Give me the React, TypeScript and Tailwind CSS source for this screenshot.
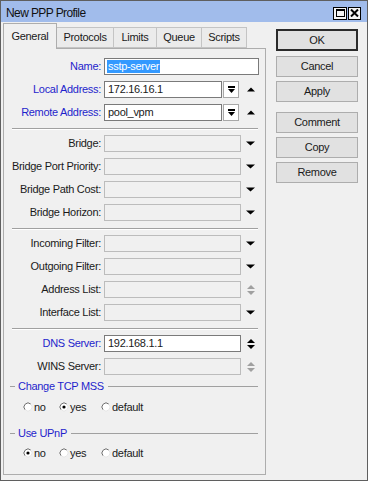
import React from "react";

const BLUE = "text-[#1f1fcc]";

function Up({ color = "#000" }: { color?: string }) {
  return (
    <svg width="8" height="5" viewBox="0 0 8 5">
      <polygon points="0,4.5 8,4.5 4,0.5" fill={color} />
    </svg>
  );
}
function Down({ color = "#000" }: { color?: string }) {
  return (
    <svg width="9" height="5" viewBox="0 0 9 5">
      <polygon points="0,0.5 9,0.5 4.5,4.5" fill={color} />
    </svg>
  );
}
function UpDown({ color = "#000" }: { color?: string }) {
  return (
    <div className="flex flex-col items-center gap-[2px]">
      <svg width="8" height="4" viewBox="0 0 8 4">
        <polygon points="0,4 8,4 4,0" fill={color} />
      </svg>
      <svg width="8" height="4" viewBox="0 0 8 4">
        <polygon points="0,0 8,0 4,4" fill={color} />
      </svg>
    </div>
  );
}

function Label({ text, blue }: { text: string; blue?: boolean }) {
  return (
    <div className={`w-[100px] text-right pr-[3px] whitespace-nowrap ${blue ? BLUE : "text-[#1a1a1a]"}`}>{text}</div>
  );
}

function Row({
  label,
  blue,
  value,
  disabled,
  kind,
}: {
  label: string;
  blue?: boolean;
  value?: string;
  disabled?: boolean;
  kind: "name" | "addr" | "down" | "updown" | "updowngray";
}) {
  const inputCls = disabled
    ? "h-[17px] border border-[#bcbcbc] bg-[#f0f0f0]"
    : "h-[17px] border border-[#7a7a7a] bg-white";
  return (
    <div className="flex h-[23px] items-center">
      <Label text={label} blue={blue} />
      {kind === "name" && (
        <div className={`${inputCls} w-[155px] flex items-center pl-[2px]`}>
          <span className="bg-[#3399ff] text-white px-[1px] leading-[13px]">{value}</span>
        </div>
      )}
      {kind === "addr" && (
        <>
          <div className={`${inputCls} w-[118px] flex items-center pl-[3px]`}>{value}</div>
          <div className="ml-[1px] w-[16px] h-[17px] border border-[#a8a8a8] bg-white flex flex-col items-center justify-center gap-[1px]">
            <div className="w-[7px] h-[1.5px] bg-black" />
            <svg width="7" height="4" viewBox="0 0 7 4">
              <polygon points="0,0 7,0 3.5,4" fill="#000" />
            </svg>
          </div>
          <div className="w-[23px] flex justify-center">
            <Up />
          </div>
        </>
      )}
      {(kind === "down" || kind === "updown" || kind === "updowngray") && (
        <>
          <div className={`${inputCls} w-[137px] flex items-center pl-[3px]`}>{value}</div>
          <div className="w-[19px] flex justify-center">
            {kind === "down" && <Down />}
            {kind === "updown" && <UpDown />}
            {kind === "updowngray" && <UpDown color="#a0a0a0" />}
          </div>
        </>
      )}
    </div>
  );
}

function Sep() {
  return <div className="ml-[8px] mr-[7px] mt-[4px] mb-[2px] border-t border-t-[#a0a0a0] border-b border-b-white" />;
}

function Group({ title, className }: { title: string; className: string }) {
  return (
    <div className={`flex h-[14px] items-center ${className}`}>
      <div className="ml-[6px] w-[5px] h-px bg-[#a0a0a0]" />
      <div className={`ml-[3px] ${BLUE} whitespace-nowrap`}>{title}</div>
      <div className="ml-[4px] mr-[7px] flex-1 h-px bg-[#a0a0a0]" />
    </div>
  );
}

function Radio({ checked }: { checked?: boolean }) {
  return (
    <svg width="10" height="10" viewBox="0 0 10 10">
      <circle cx="5" cy="5" r="4" fill="white" />
      <path d="M2.17 7.83 A4 4 0 0 1 7.83 2.17" stroke="#6e6e6e" strokeWidth="1" fill="none" />
      <path d="M7.83 2.17 A4 4 0 0 1 2.17 7.83" stroke="#e6e6e6" strokeWidth="1" fill="none" />
      {checked && <circle cx="5" cy="5" r="1.6" fill="#000" />}
    </svg>
  );
}

function Radios({ sel, className }: { sel: number; className: string }) {
  const items = ["no", "yes", "default"];
  const widths = ["w-[36px]", "w-[42px]", "w-[60px]"];
  return (
    <div className={`flex h-[14px] items-center pl-[19px] ${className}`}>
      {items.map((t, i) => (
        <div key={t} className={`flex items-center gap-[1px] ${widths[i]}`}>
          <Radio checked={sel === i} />
          <span>{t}</span>
        </div>
      ))}
    </div>
  );
}

function Btn({ text, cls }: { text: string; cls: string }) {
  return (
    <div
      className={`w-[82px] flex items-center justify-center bg-[#e1e1e1] ${cls}`}
    >
      {text}
    </div>
  );
}

export default function App() {
  const tabs = ["Protocols", "Limits", "Queue", "Scripts"];
  const tabW = ["w-[57px]", "w-[43px]", "w-[45px]", "w-[45px]"];
  return (
    <div className="w-[368px] h-[481px] bg-[#f0f0f0] border border-[#5f5f5f] flex flex-col overflow-hidden font-['Liberation_Sans',Arial,sans-serif] text-[11px] leading-[13px] tracking-[-0.3px] text-[#1a1a1a]">
      {/* title bar */}
      <div className="h-[21px] bg-[#a1bceb] flex items-center justify-between pt-[3px]">
        <div className="pl-[5px] text-[12px] tracking-[-0.6px] text-[#111]">New PPP Profile</div>
        <div className="flex gap-[1px] mr-[6px]">
          <div className="w-[14px] h-[13px] border border-black bg-[#f4f4f4] flex items-center justify-center">
            <div className="w-[9px] h-[8px] border border-black border-t-2" />
          </div>
          <div className="w-[13px] h-[13px] border border-black bg-[#f4f4f4] flex items-center justify-center">
            <svg width="9" height="8" viewBox="0 0 9 8">
              <path d="M1 0.5 L8 7.5 M8 0.5 L1 7.5" stroke="#000" strokeWidth="2" />
            </svg>
          </div>
        </div>
      </div>

      <div className="flex flex-1">
        {/* left side */}
        <div className="w-[265px] pl-[2px] pt-[1px]">
          {/* tabs */}
          <div className="flex h-[25px] items-start">
            <div className="relative z-10 w-[54px] h-[26px] border border-[#adadad] border-b-0 bg-[#f0f0f0] flex items-center justify-center pb-[1px]">
              General
            </div>
            {tabs.map((t, i) => (
              <div
                key={t}
                className={`mt-[4px] ${tabW[i]} h-[21px] border border-[#c4c4c4] border-l-0 bg-[#ebebeb] flex items-center justify-center`}
              >
                {t}
              </div>
            ))}
          </div>
          {/* panel */}
          <div className="w-[263px] h-[427px] border border-[#adadad] bg-[#f0f0f0] pt-[6px]">
            <Row label="Name:" blue value="sstp-server" kind="name" />
            <Row label="Local Address:" blue value="172.16.16.1" kind="addr" />
            <Row label="Remote Address:" blue value="pool_vpm" kind="addr" />
            <Sep />
            <Row label="Bridge:" disabled kind="down" />
            <Row label="Bridge Port Priority:" disabled kind="down" />
            <Row label="Bridge Path Cost:" disabled kind="down" />
            <Row label="Bridge Horizon:" disabled kind="down" />
            <Sep />
            <Row label="Incoming Filter:" disabled kind="down" />
            <Row label="Outgoing Filter:" disabled kind="down" />
            <Row label="Address List:" disabled kind="updowngray" />
            <Row label="Interface List:" disabled kind="down" />
            <Sep />
            <Row label="DNS Server:" blue value="192.168.1.1" kind="updown" />
            <Row label="WINS Server:" disabled kind="updowngray" />
            <Group title="Change TCP MSS" className="mt-[1px]" />
            <Radios sel={1} className="mt-[7px]" />
            <Group title="Use UPnP" className="mt-[12px]" />
            <Radios sel={0} className="mt-[6px]" />
          </div>
        </div>

        {/* buttons */}
        <div className="ml-[10px] pt-[7px] flex flex-col">
          <Btn text="OK" cls="h-[22px] border-2 border-[#2b2b2b]" />
          <Btn text="Cancel" cls="mt-[5px] h-[21px] border border-[#adadad]" />
          <Btn text="Apply" cls="mt-[4px] h-[21px] border border-[#adadad]" />
          <Btn text="Comment" cls="mt-[10px] h-[21px] border border-[#adadad]" />
          <Btn text="Copy" cls="mt-[4px] h-[21px] border border-[#adadad]" />
          <Btn text="Remove" cls="mt-[4px] h-[21px] border border-[#adadad]" />
        </div>
      </div>
    </div>
  );
}
